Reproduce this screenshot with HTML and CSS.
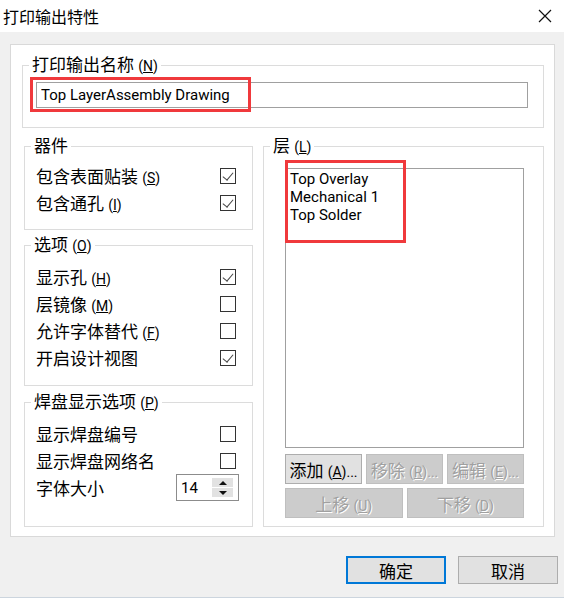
FILE: index.html
```html
<!DOCTYPE html>
<!-- Диалог свойств вывода на печать -->
<html lang="zh-CN">
<head>
  <meta charset="UTF-8">
  <meta name="viewport" content="width=device-width, initial-scale=1.0">
  <title>打印输出特性</title>
  <link rel="stylesheet" href="styles.css">
</head>
<body>
  <div class="dialog">
    <!-- Заголовок окна -->
    <div class="titlebar">
      <span class="title">打印输出特性</span>
      <svg class="close" width="14" height="14" viewBox="0 0 14 14">
        <path d="M1 1L13 13M13 1L1 13" stroke="#111" stroke-width="1.2" fill="none"/>
      </svg>
    </div>

    <div class="client">
      <div class="panel">
        <!-- Имя вывода -->
        <fieldset class="group name-group">
          <legend>打印输出名称 <span class="key">(<u>N</u>)</span></legend>
          <div class="name-body">
            <input class="text-input" type="text" value="Top LayerAssembly Drawing">
            <span class="mark name-mark"></span>
          </div>
        </fieldset>

        <div class="columns">
          <!-- Левая колонка с опциями -->
          <div class="left-col">
            <fieldset class="group">
              <legend>器件</legend>
              <div class="rows">
                <div class="row"><span>包含表面贴装 <span class="key">(<u>S</u>)</span></span><span class="check on"></span></div>
                <div class="row"><span>包含通孔 <span class="key">(<u>I</u>)</span></span><span class="check on"></span></div>
              </div>
            </fieldset>

            <fieldset class="group options-group">
              <legend>选项 <span class="key">(<u>O</u>)</span></legend>
              <div class="rows options-rows">
                <div class="row"><span>显示孔 <span class="key">(<u>H</u>)</span></span><span class="check on"></span></div>
                <div class="row"><span>层镜像 <span class="key">(<u>M</u>)</span></span><span class="check"></span></div>
                <div class="row"><span>允许字体替代 <span class="key">(<u>F</u>)</span></span><span class="check"></span></div>
                <div class="row"><span>开启设计视图</span><span class="check on"></span></div>
              </div>
            </fieldset>

            <fieldset class="group pads-group">
              <legend>焊盘显示选项 <span class="key">(<u>P</u>)</span></legend>
              <div class="rows pads-rows">
                <div class="row"><span>显示焊盘编号</span><span class="check"></span></div>
                <div class="row"><span>显示焊盘网络名</span><span class="check"></span></div>
                <div class="row">
                  <span>字体大小</span>
                  <div class="spin">
                    <span class="spin-val">14</span>
                    <div class="spin-btns">
                      <span class="spin-btn"><span class="arrow up"></span></span>
                      <span class="spin-btn"><span class="arrow down"></span></span>
                    </div>
                  </div>
                </div>
              </div>
            </fieldset>
          </div>

          <!-- Правая колонка: список слоёв -->
          <fieldset class="group layers-group">
            <legend>层 <span class="key">(<u>L</u>)</span></legend>
            <div class="layers-body">
              <div class="listbox">
                <div class="item">Top Overlay</div>
                <div class="item">Mechanical 1</div>
                <div class="item">Top Solder</div>
              </div>
              <span class="mark list-mark"></span>
              <div class="btn-row three">
                <button class="btn">添加 <span class="key">(<u>A</u>)...</span></button>
                <button class="btn" disabled>移除 <span class="key">(<u>R</u>)...</span></button>
                <button class="btn" disabled>编辑 <span class="key">(<u>E</u>)...</span></button>
              </div>
              <div class="btn-row two">
                <button class="btn" disabled>上移 <span class="key">(<u>U</u>)</span></button>
                <button class="btn" disabled>下移 <span class="key">(<u>D</u>)</span></button>
              </div>
            </div>
          </fieldset>
        </div>
      </div>

      <!-- Кнопки диалога -->
      <div class="footer">
        <button class="btn dlg-btn default">确定</button>
        <button class="btn dlg-btn">取消</button>
      </div>
    </div>
  </div>
</body>
</html>
```

FILE: styles.css
```css
/* Общие настройки */
* {
  box-sizing: border-box;
}

body {
  margin: 0;
  font-family: Roboto, "Noto Sans CJK SC", sans-serif;
  color: #000;
}

/* Окно диалога */
.dialog {
  width: 564px;
  height: 598px;
  background: #f0f0f0;
  border-bottom: 1px solid #ccd5de;
}

/* Заголовок */
.titlebar {
  height: 32px;
  background: #fff;
  display: flex;
  align-items: center;
  justify-content: space-between;
  padding: 0 12px 0 3px;
}

.title {
  font-size: 16px;
}

.client {
  padding: 12px 0 0 10px;
}

/* Белая панель со всеми группами */
.panel {
  width: 545px;
  height: 493px;
  background: #fff;
  border: 1px solid #d9d9d9;
  padding: 0 10px 0 11px;
}

/* Группа с рамкой */
.group {
  margin: 0;
  padding: 0;
  min-width: 0;
  border: 1px solid #dcdcdc;
}

.group legend {
  height: 20px;
  margin-left: 6px;
  padding: 0 3px;
  font-size: 17px;
  line-height: 20px;
}

.key {
  font-size: 14px;
}

.name-group {
  margin-top: 10px;
}

.name-body {
  position: relative;
  padding: 7px 15px 19px 13px;
}

.text-input {
  display: block;
  width: 100%;
  height: 26px;
  margin: 0;
  border: 1px solid #a0a0a0;
  padding: 0 4px;
  font-family: Roboto, sans-serif;
  font-size: 15px;
  color: #000;
  outline: none;
}

/* Красные рамки-пометки */
.mark {
  position: absolute;
  border: 3px solid #f0393c;
  pointer-events: none;
}

.name-mark {
  left: 7px;
  top: 2px;
  width: 221px;
  height: 35px;
}

/* Две колонки */
.columns {
  display: flex;
  gap: 10px;
  margin: 8px 0 0 2px;
}

.left-col {
  width: 229px;
  display: flex;
  flex-direction: column;
}

.options-group {
  margin-top: 5px;
}

.pads-group {
  margin-top: 6px;
}

.rows {
  padding: 6px 0 13px 0;
}

.options-rows {
  padding: 8px 0 14px 0;
}

.pads-rows {
  padding: 8px 0 25px 0;
}

.row {
  display: flex;
  align-items: center;
  justify-content: space-between;
  height: 27px;
  padding: 0 16px 0 11px;
  font-size: 17px;
}

/* Флажок */
.check {
  position: relative;
  width: 16px;
  height: 16px;
  border: 1px solid #333;
  background: #fff;
}

.check.on::after {
  content: '';
  position: absolute;
  left: 4px;
  top: 1px;
  width: 5px;
  height: 9px;
  border: solid #444;
  border-width: 0 1.3px 1.3px 0;
  transform: rotate(40deg);
}

/* Поле со счётчиком */
.spin {
  display: flex;
  align-items: center;
  justify-content: space-between;
  width: 63px;
  height: 27px;
  margin-right: -3px;
  border: 1px solid #8c8c8c;
  padding: 0 5px 0 4px;
}

.spin-val {
  font-size: 15px;
}

.spin-btns {
  display: flex;
  flex-direction: column;
  gap: 1px;
  width: 21px;
}

.spin-btn {
  display: flex;
  align-items: center;
  justify-content: center;
  height: 9px;
  background: #e2e2e2;
}

.arrow {
  width: 0;
  height: 0;
  border-left: 4px solid transparent;
  border-right: 4px solid transparent;
}

.arrow.up {
  border-bottom: 4px solid #111;
}

.arrow.down {
  border-top: 4px solid #111;
}

/* Список слоёв */
.layers-group {
  flex: 1;
}

.layers-body {
  position: relative;
  padding: 12px 19px 8px 21px;
}

.listbox {
  height: 280px;
  border: 1px solid #a0a0a0;
  padding: 1px 4px;
  font-size: 15px;
  line-height: 18px;
}

.list-mark {
  left: 21px;
  top: 4px;
  width: 121px;
  height: 83px;
}

.btn-row {
  display: grid;
  gap: 4px;
  margin-top: 4px;
}

.btn-row.three {
  grid-template-columns: repeat(3, 1fr);
  margin-top: 6px;
}

.btn-row.two {
  grid-template-columns: repeat(2, 1fr);
}

/* Кнопки */
.btn {
  height: 30px;
  margin: 0;
  padding: 0;
  border: 1px solid #adadad;
  background: #e1e1e1;
  font-family: Roboto, "Noto Sans CJK SC", sans-serif;
  font-size: 17px;
  color: #000;
  white-space: nowrap;
}

.btn:disabled {
  background: #cccccc;
  border-color: #bfbfbf;
  color: #a0a0a0;
  text-shadow: 1px 1px 0 #fff;
}

.footer {
  display: flex;
  justify-content: flex-end;
  gap: 12px;
  margin-top: 19px;
  padding-right: 6px;
}

.dlg-btn {
  width: 100px;
  height: 28px;
}

.dlg-btn.default {
  border: 2px solid #0078d7;
}
```
